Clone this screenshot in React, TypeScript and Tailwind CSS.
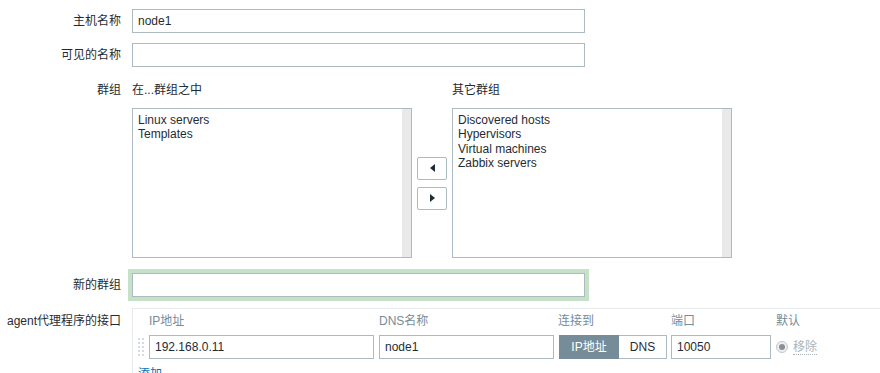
import React from 'react';

const font = "font-['Liberation_Sans','Noto_Sans_CJK_SC',sans-serif]";

const TextBox: React.FC<{ value?: string; className?: string }> = ({ value = '', className = '' }) => (
  <input
    readOnly
    value={value}
    className={`h-[24px] border border-[#acbbc2] bg-white pl-[5px] text-[12px] text-[#1f2c33] outline-none ${className}`}
  />
);

const ListBox: React.FC<{ items: string[] }> = ({ items }) => (
  <div className="flex h-[150px] w-[280px] border border-[#acbbc2] bg-white">
    <div className="flex-1 pl-[5px] pt-[4px] leading-[14.4px] text-[#1f2c33]">
      {items.map((item) => (
        <div key={item}>{item}</div>
      ))}
    </div>
    <div className="w-[9px] bg-[#e9e9e9]"></div>
  </div>
);

const ArrowButton: React.FC<{ dir: 'left' | 'right' }> = ({ dir }) => (
  <button className="flex h-[23px] w-[30px] items-center justify-center rounded-[2px] border border-[#acbbc2] bg-white">
    <svg width="5" height="8" viewBox="0 0 5 8">
      {dir === 'left' ? <path d="M5 0v8L0 4z" fill="#1f2c33" /> : <path d="M0 0v8l5-4z" fill="#1f2c33" />}
    </svg>
  </button>
);

const Label: React.FC<{ children: React.ReactNode; className?: string }> = ({ children, className = '' }) => (
  <div className={`w-[121px] shrink-0 text-right leading-[14px] text-[#1f2c33] ${className}`}>{children}</div>
);

const App: React.FC = () => {
  return (
    <div className={`h-[373px] w-[880px] overflow-hidden bg-white pt-[9px] text-[12px] ${font}`}>
      <div className="flex items-center gap-[11px]">
        <Label>主机名称</Label>
        <TextBox value="node1" className="w-[453px]" />
      </div>

      <div className="mt-[10px] flex items-center gap-[11px]">
        <Label>可见的名称</Label>
        <TextBox className="w-[453px]" />
      </div>

      <div className="mt-[10px] flex gap-[11px]">
        <Label className="pt-[6px]">群组</Label>
        <div className="flex">
          <div>
            <div className="h-[31px] pt-[6px] leading-[14px] text-[#1f2c33]">在...群组之中</div>
            <ListBox items={['Linux servers', 'Templates']} />
          </div>
          <div className="mt-[31px] flex h-[150px] w-[40px] flex-col justify-center gap-[7px] pl-[5px]">
            <ArrowButton dir="left" />
            <ArrowButton dir="right" />
          </div>
          <div>
            <div className="h-[31px] pt-[6px] leading-[14px] text-[#1f2c33]">其它群组</div>
            <ListBox items={['Discovered hosts', 'Hypervisors', 'Virtual machines', 'Zabbix servers']} />
          </div>
        </div>
      </div>

      <div className="mt-[15px] flex items-center gap-[11px]">
        <Label>新的群组</Label>
        <TextBox className="w-[453px] shadow-[0_0_0_4px_#c5e1c8]" />
      </div>

      <div className="mt-[11px] flex gap-[11px]">
        <Label className="pt-[6px]">agent代理程序的接口</Label>
        <div className="flex-1 border-l border-t border-[#e6eaec] pt-[5px]">
          <div className="flex h-[14px] items-center leading-[14px] text-[#768d99]">
            <div className="w-[16px]"></div>
            <div className="w-[230px]">IP地址</div>
            <div className="w-[179px]">DNS名称</div>
            <div className="w-[113px]">连接到</div>
            <div className="w-[105px]">端口</div>
            <div>默认</div>
          </div>
          <div className="mt-[7px] flex items-center">
            <div className="w-[16px] pl-[5px]">
              <div className="h-[18px] w-[6px] border-x-2 border-dotted border-[#d5dbde]"></div>
            </div>
            <TextBox value="192.168.0.11" className="w-[225px]" />
            <TextBox value="node1" className="ml-[5px] w-[175px]" />
            <div className="ml-[5px] flex h-[24px] w-[108px]">
              <div className="flex w-[60px] items-center justify-center bg-[#768d99] text-white">IP地址</div>
              <div className="flex flex-1 items-center justify-center border border-l-0 border-[#acbbc2] bg-white text-[#1f2c33]">
                DNS
              </div>
            </div>
            <TextBox value="10050" className="ml-[4px] w-[100px]" />
            <div className="ml-[5px] flex items-center gap-[5px]">
              <div className="flex h-[12px] w-[12px] items-center justify-center rounded-full border border-[#c2c8cc] bg-[#eeeeee]">
                <div className="h-[6px] w-[6px] rounded-full bg-[#8a9196]"></div>
              </div>
              <span className="border-b border-dotted border-[#a9b4ba] leading-[14px] text-[#a9b4ba]">移除</span>
            </div>
          </div>
          <div className="mt-[8px] pl-[5px] leading-[14px] text-[#0275b8]">添加</div>
        </div>
      </div>
    </div>
  );
};

export default App;
